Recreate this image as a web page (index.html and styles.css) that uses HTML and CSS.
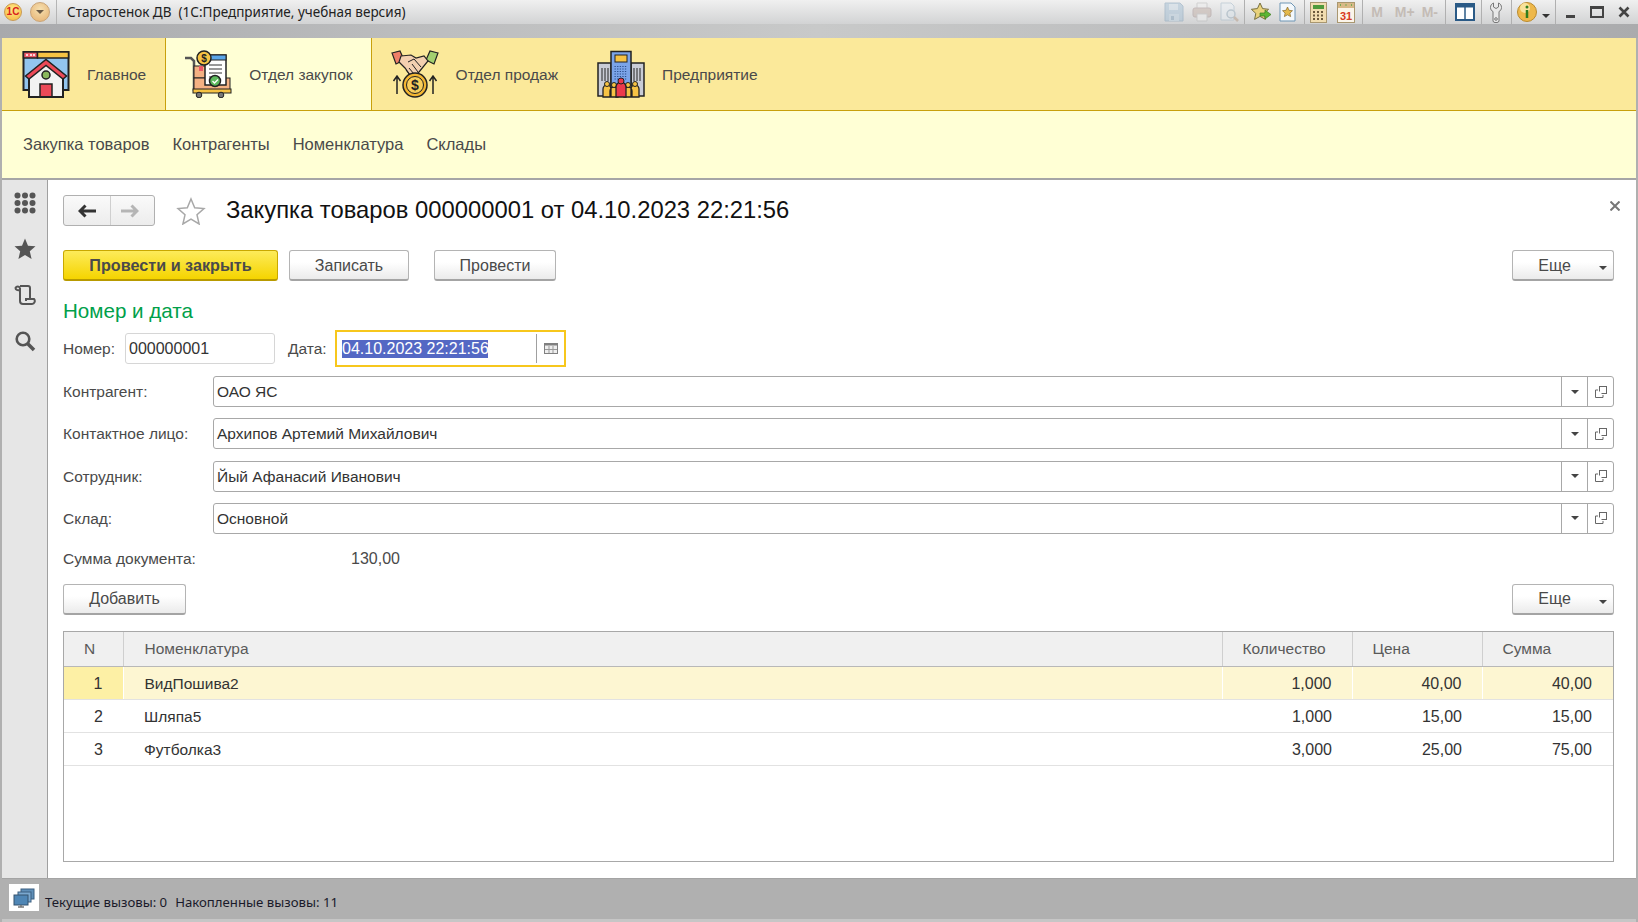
FILE: index.html
```html
<!DOCTYPE html>
<html lang="ru">
<head>
    <meta charset="UTF-8">
    <title>Закупка товаров</title>
    <link rel="stylesheet" href="styles.css">
</head>
<body>
<div class="app">
    <div class="titlebar">
        <span class="logo-1c">1С</span>
        <span class="menu-btn"><i></i></span>
        <span class="title-sep"></span>
        <span class="title-text">Старостенок ДВ&nbsp; (1С:Предприятие, учебная версия)</span>
        <div class="tools">
            <svg class="tool dim" width="20" height="20" viewBox="0 0 20 20"><path d="M1 1h15l3 3v15H1z" fill="#a9c2d6" stroke="#8aa6bd"/><path d="M5 2h9v6H5z" fill="#cfdde8"/><path d="M5 12h10v7H5z" fill="#bcd0df"/><path d="M7 14h3v4H7z" fill="#8aa6bd"/></svg>
            <svg class="tool dim gap-8" width="20" height="20" viewBox="0 0 20 20"><path d="M5 1h10v6H5z" fill="#eee" stroke="#bbb"/><rect x="1" y="6" width="18" height="9" rx="2" fill="#c4b4ac" stroke="#a99"/><path d="M5 12h10v7H5z" fill="#eee" stroke="#bbb"/></svg>
            <svg class="tool dim gap-7" width="20" height="20" viewBox="0 0 20 20"><path d="M2 1h10l3 3v14H2z" fill="#e8eef3" stroke="#a8bccb"/><circle cx="12" cy="12" r="4" fill="#dde6ec" stroke="#9cb0bf" stroke-width="1.5"/><path d="M15 15l4 4" stroke="#b9a08c" stroke-width="2.5"/></svg>
            <span class="tool-sep gap-5"></span>
            <svg class="gap-6" width="20" height="20" viewBox="0 0 20 20"><path d="M9 1l2.600 5.600 6 .7-4.400 4.100 1.200 6L9 14.400l-5.400 3 1.200-6L.4 7.300l6-.7z" fill="#e9d27c" stroke="#77703f"/><path d="M9 11h5V8l6 4.500-6 4.500v-3H9z" fill="#5cb531" stroke="#3c7d20" stroke-width=".7"/></svg>
            <svg class="gap-8" width="17" height="20" viewBox="0 0 17 20"><path d="M1 1h11l4 4v14H1z" fill="#f4f8fb" stroke="#6f96b5"/><path d="M8.500 5l1.500 3.300 3.500.4-2.600 2.400.7 3.500-3.100-1.800-3.100 1.800.7-3.500L3.500 8.700 7 8.300z" fill="#e4b94a" stroke="#86692a" stroke-width=".7"/></svg>
            <span class="tool-sep gap-8"></span>
            <svg class="gap-5" width="17" height="21" viewBox="0 0 17 21"><rect x=".5" y=".5" width="16" height="20" fill="#f1ddb0" stroke="#a99770"/><rect x="3" y="3" width="11" height="4" fill="#4f9a3c"/><path d="M3 9h2v2H3zM7 9h2v2H7zM11 9h2v2h-2zM3 12.500h2v2H3zM7 12.500h2v2H7zM11 12.500h2v2h-2zM3 16h2v2H3zM7 16h2v2H7zM11 16h2v2h-2z" fill="#6b5a3c"/></svg>
            <svg class="gap-10" width="18" height="21" viewBox="0 0 18 21"><rect x=".5" y=".5" width="17" height="20" fill="#fbf5ea" stroke="#a99770"/><rect x="1" y="1" width="16" height="5" fill="#d8b988"/><path d="M3 3h1M8.500 3h1M14 3h1" stroke="#7a5" stroke-width="2"/><text class="cal-num" x="9" y="18" text-anchor="middle">31</text></svg>
            <span class="tool-sep gap-7"></span>
            <span class="mem gap-8">M</span>
            <span class="mem gap-12">M+</span>
            <span class="mem gap-7">M-</span>
            <span class="tool-sep gap-7"></span>
            <svg class="gap-9" width="20" height="18" viewBox="0 0 20 18"><rect x="1" y="1" width="18" height="16" fill="#fff" stroke="#2a5a86" stroke-width="2"/><path d="M1 3h18" stroke="#2a5a86" stroke-width="3"/><path d="M10 2v15" stroke="#2a5a86" stroke-width="1.500"/></svg>
            <span class="tool-sep gap-6"></span>
            <svg class="gap-8" width="12" height="21" viewBox="0 0 12 21"><path d="M3.500 1v4l2.500 1.500L8.500 5V1c2 .8 3 2.500 3 4.500 0 2-1.200 3.500-2.500 4V19a2 2 0 0 1-2 1.500H5A2 2 0 0 1 3 19V9.500C1.700 9 .5 7.500.5 5.500c0-2 1-3.700 3-4.500z" fill="#e8e8e8" stroke="#777"/><circle cx="6" cy="17" r="1.300" fill="none" stroke="#777"/></svg>
            <span class="tool-sep gap-9"></span>
            <svg class="gap-5" width="20" height="20" viewBox="0 0 20 20"><circle cx="10" cy="10" r="9.500" fill="#eeb84a" stroke="#b98a2e"/><circle cx="8" cy="6" r="5" fill="#f8e29a"/><circle cx="10" cy="5" r="1.500" fill="#2f7d1e"/><path d="M10 8v8" stroke="#2f7d1e" stroke-width="2.500"/></svg>
            <i class="caret caret-dark"></i>
            <span class="tool-sep gap-5"></span>
            <span class="win-min"></span>
            <span class="win-max"></span>
            <svg class="win-close" width="12" height="12" viewBox="0 0 12 12"><path d="M1.500 1.500l9 9M10.500 1.500l-9 9" stroke="#444" stroke-width="2.600"/></svg>
        </div>
    </div>
    <div class="title-band"></div>

    <div class="frame">
        <nav class="sections">
            <a class="section">
                <svg width="48" height="48" viewBox="0 0 48 48">
                    <rect x="1.500" y="2" width="45" height="38" fill="#93c5ee" stroke="#222" stroke-width="2"/>
                    <rect x="1.500" y="2" width="14" height="6" fill="#ec5a68" stroke="#222" stroke-width="1.500"/>
                    <rect x="15.500" y="2" width="31" height="6" fill="#f6c344" stroke="#222" stroke-width="1.500"/>
                    <path d="M4 5h2M8 5h2M11 5h2" stroke="#fff" stroke-width="1.500"/>
                    <path d="M7 25L24 11l17 14v22H7z" fill="#f2f2f2" stroke="#222" stroke-width="2"/>
                    <path d="M3.500 26L24 9.500 44.500 26 41 29 24 15.500 7 29z" fill="#ec4a58" stroke="#222" stroke-width="1.500"/>
                    <circle cx="24" cy="25" r="4" fill="#8ab85c" stroke="#222" stroke-width="1.500"/>
                    <rect x="18" y="34" width="12" height="13" fill="#ec4a58" stroke="#222" stroke-width="1.500"/>
                    <path d="M7 47h34" stroke="#222" stroke-width="2"/>
                </svg>
                <span>Главное</span>
            </a>
            <a class="section active">
                <svg width="48" height="48" viewBox="0 0 48 48">
                    <path d="M1 8h6l3 3v30" fill="none" stroke="#555" stroke-width="2.500"/>
                    <rect x="10" y="16" width="14" height="12" fill="#f4b183" stroke="#222"/>
                    <rect x="10" y="28" width="36" height="12" fill="#f4b183" stroke="#222"/>
                    <rect x="15" y="16" width="4" height="5" fill="#ec5a68"/>
                    <rect x="21" y="5" width="21" height="30" fill="#fff" stroke="#222" stroke-width="1.500"/>
                    <rect x="21" y="5" width="21" height="5" fill="#5aa5e8" stroke="#222"/>
                    <path d="M25 15h13M25 19h13M25 23h13M25 27h6" stroke="#333" stroke-width="1.200"/>
                    <circle cx="20" cy="8" r="7" fill="#f6c344" stroke="#222" stroke-width="1.500"/>
                    <text class="coin-s" x="20" y="12" text-anchor="middle">$</text>
                    <circle cx="31" cy="31" r="5.500" fill="#5cb85c" stroke="#222" stroke-width="1.500"/>
                    <path d="M28.500 31l2 2 3.500-3.500" fill="none" stroke="#fff" stroke-width="1.300"/>
                    <rect x="9" y="39" width="38" height="4" fill="#f6c344" stroke="#222"/>
                    <circle cx="15" cy="45" r="2.800" fill="#777" stroke="#222"/>
                    <circle cx="37" cy="45" r="2.800" fill="#777" stroke="#222"/>
                </svg>
                <span>Отдел закупок</span>
            </a>
            <a class="section">
                <svg width="48" height="48" viewBox="0 0 48 48">
                    <path d="M1 3l8-2 4 9-8 4z" fill="#ef7f68" stroke="#222" stroke-width="1.200"/>
                    <path d="M47 3l-8-2-4 9 8 4z" fill="#a4d070" stroke="#222" stroke-width="1.200"/>
                    <path d="M10 6l10-1 5 3 8-2 4 5-9 11-5 5-4-2-5-7-6-6z" fill="#f3d0b0" stroke="#222" stroke-width="1.200"/>
                    <path d="M17 12l6-3 7 8M21 14l6 8M18 18l5 6M15 20l4 5" fill="none" stroke="#222" stroke-width="1"/>
                    <circle cx="24" cy="35" r="12" fill="#f2b632" stroke="#222" stroke-width="1.500"/>
                    <circle cx="24" cy="35" r="8.500" fill="#f9cf5c" stroke="#222" stroke-width="1"/>
                    <text class="coin-b" x="24" y="40" text-anchor="middle">$</text>
                    <path d="M6 44V27M2.500 31L6 26l3.500 5M42 44V27M38.500 31L42 26l3.500 5" fill="none" stroke="#222" stroke-width="1.500"/>
                </svg>
                <span>Отдел продаж</span>
            </a>
            <a class="section">
                <svg width="48" height="48" viewBox="0 0 48 48">
                    <rect x="1" y="13" width="13" height="33" fill="#c9ccd6" stroke="#222" stroke-width="1.500"/>
                    <rect x="34" y="13" width="13" height="33" fill="#c9ccd6" stroke="#222" stroke-width="1.500"/>
                    <path d="M5 18v13M8 18v13M11 18v13M37 18v13M40 18v13M43 18v13" stroke="#222"/>
                    <rect x="14" y="1.500" width="20" height="42" fill="#7ba4e8" stroke="#222" stroke-width="1.500"/>
                    <rect x="18" y="5" width="12" height="7" fill="#f6c344" stroke="#222"/>
                    <path d="M17.500 16.500h13M17.500 19h13M17.500 21.500h13M17.500 24h13M17.500 26.500h13M17.500 29h13" stroke="#2c4f8c" stroke-width="1.200" stroke-dasharray="1.300 1.300"/>
                    <path d="M6 47v-8a4 4 0 0 1 8 0v8zM13 47v-6a4 4 0 0 1 8 0v6zM27 47v-6a4 4 0 0 1 8 0v6zM34 47v-8a4 4 0 0 1 8 0v8z" fill="#f6c344" stroke="#222" stroke-width="1.300"/>
                    <circle cx="10" cy="34" r="2.500" fill="#f6c344" stroke="#222"/>
                    <circle cx="17" cy="35" r="2.500" fill="#f6c344" stroke="#222"/>
                    <circle cx="31" cy="35" r="2.500" fill="#f6c344" stroke="#222"/>
                    <circle cx="38" cy="34" r="2.500" fill="#f6c344" stroke="#222"/>
                    <path d="M19 47V37a5 5 0 0 1 10 0v10z" fill="#ec3a4c" stroke="#222" stroke-width="1.300"/>
                    <circle cx="24" cy="31" r="3" fill="#ec3a4c" stroke="#222"/>
                </svg>
                <span>Предприятие</span>
            </a>
        </nav>
        <nav class="subsections">
            <a>Закупка товаров</a>
            <a>Контрагенты</a>
            <a>Номенклатура</a>
            <a>Склады</a>
        </nav>

        <div class="main">
            <aside class="sidebar">
                <svg width="22" height="22" viewBox="0 0 22 22" fill="#555">
                    <circle cx="3.500" cy="3.500" r="3"/><circle cx="11" cy="3.500" r="3"/><circle cx="18.500" cy="3.500" r="3"/>
                    <circle cx="3.500" cy="11" r="3"/><circle cx="11" cy="11" r="3"/><circle cx="18.500" cy="11" r="3"/>
                    <circle cx="3.500" cy="18.500" r="3"/><circle cx="11" cy="18.500" r="3"/><circle cx="18.500" cy="18.500" r="3"/>
                </svg>
                <svg width="22" height="22" viewBox="0 0 22 22"><path d="M11 .5l3 7.200 7.500.6-5.700 5 1.800 7.700L11 16.900 4.400 21l1.800-7.700-5.700-5L8 7.700z" fill="#555"/></svg>
                <svg width="22" height="22" viewBox="0 0 22 22" fill="none" stroke="#555" stroke-width="2"><path d="M6 4v13a3 3 0 0 0 3 3h9a3 3 0 0 0 2-5h-8v2M6 4a2.500 2.500 0 0 0-4.500 0c0 2 2 2.500 4.500 2M6 2h8a2 2 0 0 1 2 2v11"/></svg>
                <svg width="22" height="22" viewBox="0 0 22 22" fill="none" stroke="#555"><circle cx="9" cy="9" r="6.300" stroke-width="2.600"/><path d="M13.500 13.500l6.500 6.500" stroke-width="3.600"/></svg>
            </aside>

            <div class="content">
                <div class="heading">
                    <div class="nav-btns">
                        <button class="nav-btn">
                            <svg width="18" height="14" viewBox="0 0 18 14"><path d="M7.500 1.500L2 7l5.500 5.500M2 7h16" fill="none" stroke="#333" stroke-width="3"/></svg>
                        </button>
                        <button class="nav-btn nav-next">
                            <svg width="18" height="14" viewBox="0 0 18 14"><path d="M10.500 1.500L16 7l-5.500 5.500M16 7H0" fill="none" stroke="#b5b5b5" stroke-width="3"/></svg>
                        </button>
                    </div>
                    <svg class="fav" width="30" height="28" viewBox="0 0 30 28"><path d="M15 2l3.700 8.700 9.300.9-7 6.200 2.100 9.200L15 22.200 6.900 27 9 17.800 2 11.600l9.300-.9z" fill="#fff" stroke="#a8a8a8" stroke-width="1.500"/></svg>
                    <h1>Закупка товаров 000000001 от 04.10.2023 22:21:56</h1>
                    <svg class="close" width="10" height="10" viewBox="0 0 10 10"><path d="M.5.500l9 9M9.500.500l-9 9" stroke="#777" stroke-width="2"/></svg>
                </div>

                <div class="toolbar">
                    <button class="btn btn-primary">Провести и закрыть</button>
                    <button class="btn btn-save">Записать</button>
                    <button class="btn btn-post">Провести</button>
                    <button class="btn btn-more">Еще<i class="caret"></i></button>
                </div>

                <h2>Номер и дата</h2>

                <div class="number-row">
                    <label class="num-label">Номер:</label>
                    <div class="input num-input">000000001</div>
                    <label class="date-label">Дата:</label>
                    <div class="date-box">
                        <span class="date-value">04.10.2023 22:21:56</span>
                        <span class="date-pick">
                            <svg width="14" height="11" viewBox="0 0 14 11"><rect x=".5" y=".5" width="13" height="10" fill="#eee" stroke="#808080"/><path d="M0 1.500h14" stroke="#808080" stroke-width="2"/><path d="M5 3v7M9 3v7M1 6.500h12" stroke="#999"/></svg>
                        </span>
                    </div>
                </div>

                <div class="fields">
                    <label>Контрагент:</label>
                    <div class="input ref"><span>ОАО ЯС</span><b><i class="caret"></i></b><b><svg width="12" height="12" viewBox="0 0 12 12" fill="#fff" stroke="#666"><rect x="4.500" y=".5" width="7" height="7"/><path d="M3 4H.5v7.500H8V9"/></svg></b></div>
                    <label>Контактное лицо:</label>
                    <div class="input ref"><span>Архипов Артемий Михайлович</span><b><i class="caret"></i></b><b><svg width="12" height="12" viewBox="0 0 12 12" fill="#fff" stroke="#666"><rect x="4.500" y=".5" width="7" height="7"/><path d="M3 4H.5v7.500H8V9"/></svg></b></div>
                    <label class="low">Сотрудник:</label>
                    <div class="input ref low"><span>Йый Афанасий Иванович</span><b><i class="caret"></i></b><b><svg width="12" height="12" viewBox="0 0 12 12" fill="#fff" stroke="#666"><rect x="4.500" y=".5" width="7" height="7"/><path d="M3 4H.5v7.500H8V9"/></svg></b></div>
                    <label class="low">Склад:</label>
                    <div class="input ref low"><span>Основной</span><b><i class="caret"></i></b><b><svg width="12" height="12" viewBox="0 0 12 12" fill="#fff" stroke="#666"><rect x="4.500" y=".5" width="7" height="7"/><path d="M3 4H.5v7.500H8V9"/></svg></b></div>
                </div>

                <div class="sum-row">
                    <label>Сумма документа:</label>
                    <span class="sum-value">130,00</span>
                </div>

                <div class="toolbar table-bar">
                    <button class="btn btn-add">Добавить</button>
                    <button class="btn btn-more">Еще<i class="caret"></i></button>
                </div>

                <div class="grid-box">
                    <table>
                        <colgroup>
                            <col class="c-n"><col><col class="c-q"><col class="c-p"><col class="c-s">
                        </colgroup>
                        <thead>
                            <tr><th>N</th><th>Номенклатура</th><th>Количество</th><th>Цена</th><th>Сумма</th></tr>
                        </thead>
                        <tbody>
                            <tr class="current"><td class="r">1</td><td>ВидПошива2</td><td class="r">1,000</td><td class="r">40,00</td><td class="r">40,00</td></tr>
                            <tr><td class="r">2</td><td>Шляпа5</td><td class="r">1,000</td><td class="r">15,00</td><td class="r">15,00</td></tr>
                            <tr><td class="r">3</td><td>Футболка3</td><td class="r">3,000</td><td class="r">25,00</td><td class="r">75,00</td></tr>
                        </tbody>
                    </table>
                </div>
            </div>
        </div>

        <div class="statusbar">
            <span class="status-icon">
                <svg width="22" height="20" viewBox="0 0 22 20"><rect x="8" y="1" width="13" height="10" fill="#5f8fb8" stroke="#3b5f80"/><rect x="5" y="4" width="13" height="10" fill="#7aa8cf" stroke="#3b5f80"/><rect x="1" y="7" width="14" height="10" fill="#4f86b5" stroke="#34536e"/><path d="M5 19h6M8 17v2" stroke="#777" stroke-width="1.500"/></svg>
            </span>
            <span class="status-text">Текущие вызовы: 0</span>
            <span class="status-text">Накопленные вызовы: 11</span>
        </div>
    </div>
</div>
</body>
</html>
```

FILE: styles.css
```css
* {
    box-sizing: border-box;
}
body {
    margin: 0;
    font-family: "Liberation Sans", Arial, sans-serif;
    font-size: 16px;
    color: #4a4a4a;
    background: #b0b0b0;
}
.app {
    width: 1638px;
    height: 922px;
    display: flex;
    flex-direction: column;
    overflow: hidden;
}

/* window title */
.titlebar {
    height: 24px;
    display: flex;
    align-items: center;
    background: linear-gradient(#f0f0f0, #d2d3d4);
}
.logo-1c {
    width: 18px;
    height: 18px;
    margin-left: 4px;
    border-radius: 50%;
    background: radial-gradient(circle at 50% 35%, #ffe98a, #f6b73c);
    border: 1px solid #c99a52;
    color: #d8221c;
    font-size: 10px;
    font-weight: bold;
    line-height: 16px;
    text-align: center;
}
.menu-btn {
    width: 20px;
    height: 20px;
    margin-left: 8px;
    border-radius: 50%;
    background: radial-gradient(circle at 50% 35%, #f6e0b0, #e5b070);
    border: 1px solid #c9a477;
    display: flex;
    align-items: center;
    justify-content: center;
}
.menu-btn i {
    border: 4px solid transparent;
    border-top: 4px solid #6b5a45;
    margin-top: 4px;
}
.title-sep {
    width: 1px;
    height: 24px;
    margin-left: 6px;
    background: #b5b5b5;
}
.title-text {
    margin-left: 10px;
    font-family: "Noto Sans", sans-serif;
    font-size: 13.5px;
    color: #222;
    white-space: nowrap;
}
.tools {
    margin-left: auto;
    padding-right: 8px;
    display: flex;
    align-items: center;
    height: 24px;
}
.gap-5 { margin-left: 5px; }
.gap-6 { margin-left: 6px; }
.gap-7 { margin-left: 7px; }
.gap-8 { margin-left: 8px; }
.gap-9 { margin-left: 9px; }
.gap-10 { margin-left: 10px; }
.gap-12 { margin-left: 12px; }
.tool.dim {
    opacity: .55;
}
.tool-sep {
    width: 1px;
    height: 24px;
    background: #b0b0b0;
}
.mem {
    font-size: 14px;
    font-weight: bold;
    color: #c4bcb6;
}
.cal-num {
    font: bold 11px "Liberation Sans", sans-serif;
    fill: #d83a22;
}
.tools .caret {
    margin: 7px 0 0 5px;
}
.win-min {
    width: 9px;
    height: 3px;
    margin: 8px 0 0 10px;
    background: #444;
}
.win-max {
    width: 14px;
    height: 12px;
    margin-left: 15px;
    border: 2px solid #444;
    border-top-width: 3px;
}
.win-close {
    margin-left: 14px;
}
.title-band {
    height: 14px;
    background: linear-gradient(90deg, #a8a9ac, #bcbdbe 25%, #c8c9c9 50%, #bdbebf 72%, #aaabad);
}

/* frame with panels */
.frame {
    flex: 1;
    min-height: 0;
    margin: 0 2px;
    display: flex;
    flex-direction: column;
}
.sections {
    height: 73px;
    flex: none;
    display: flex;
    background: #fbe99a;
    border-bottom: 1px solid #c8a00c;
}
.section {
    display: flex;
    align-items: center;
    gap: 17px;
    padding: 0 19px 0 20px;
    color: #4a4a4a;
    font-size: 15.5px;
}
.section span {
    padding-top: 2px;
}
.section.active {
    padding: 0 18px;
    background: #ffffd5;
    border-left: 1px solid #c8a00c;
    border-right: 1px solid #c8a00c;
    height: 73px;
    border-bottom: 1px solid #c8a00c;
}
.section.active + .section {
    padding-left: 19px;
}
.subsections {
    height: 69px;
    flex: none;
    display: flex;
    align-items: center;
    gap: 23px;
    padding-left: 21px;
    font-size: 16.5px;
    background: #ffffd5;
    border-bottom: 2px solid #a6a6a6;
}

.main {
    flex: 1;
    min-height: 0;
    display: flex;
}
.sidebar {
    width: 46px;
    flex: none;
    background: #e6e6e6;
    border-right: 1px solid #a0a0a0;
    display: flex;
    flex-direction: column;
    align-items: center;
    gap: 24px;
    padding-top: 12px;
}
.content {
    flex: 1;
    min-width: 0;
    background: #fff;
    padding: 15px 22px 16px 15px;
    display: flex;
    flex-direction: column;
}

/* form heading */
.heading {
    display: flex;
    align-items: center;
    height: 31px;
    margin-bottom: 24px;
    position: relative;
}
.nav-btns {
    display: flex;
    width: 92px;
    height: 31px;
    border: 1px solid #b0b0b0;
    border-radius: 3px;
    background: linear-gradient(#fafafa, #ececec);
}
.nav-btn {
    width: 46px;
    padding: 0;
    border: 0;
    background: none;
    display: flex;
    align-items: center;
    justify-content: center;
}
.nav-next {
    width: 44px;
    padding-right: 5px;
    border-left: 1px solid #cfcfcf;
}
.fav {
    margin-left: 21px;
}
h1 {
    margin: 0 0 2px 20px;
    font-size: 23.8px;
    font-weight: normal;
    color: #111;
    white-space: nowrap;
}
.close {
    position: absolute;
    right: -6px;
    top: 6px;
}

/* buttons */
.toolbar {
    display: flex;
    height: 31px;
}
.btn {
    height: 31px;
    padding: 1px 0 0;
    font: inherit;
    color: #4a4a4a;
    border: 1px solid #b4b4b4;
    border-bottom: 2px solid #a4a4a4;
    border-radius: 3px;
    background: linear-gradient(#fff 40%, #ebebeb);
}
.btn-primary {
    width: 215px;
    font-size: 16.2px;
    font-weight: bold;
    background: linear-gradient(#fdeb5a, #f5d400);
    border-color: #c9a800;
    border-bottom-color: #b89a00;
}
.btn-save {
    width: 120px;
    margin-left: 11px;
}
.btn-post {
    width: 122px;
    margin-left: 25px;
}
.btn-more {
    width: 102px;
    margin-left: auto;
    position: relative;
    padding-right: 17px;
}
.btn-add {
    width: 123px;
}
.caret {
    display: inline-block;
    border: 4px solid transparent;
    border-top: 4px solid #444;
    border-bottom: 0;
}
.btn-more .caret {
    position: absolute;
    right: 6px;
    top: 15px;
}
.caret-dark {
    border-top-color: #333;
}

h2 {
    margin: 18px 0 7px;
    height: 24px;
    line-height: 24px;
    font-size: 20.6px;
    font-weight: normal;
    color: #00a04a;
}

/* fields */
label {
    color: #4a4a4a;
    font-size: 15.5px;
    white-space: nowrap;
}
label.low {
    padding-top: 1px;
}
.input {
    height: 31px;
    border: 1px solid #bdbdbd;
    border-radius: 3px;
    color: #333;
    display: flex;
    align-items: center;
    padding-left: 3px;
}
.number-row {
    display: flex;
    align-items: center;
    height: 37px;
}
.num-label {
    width: 52px;
    flex: none;
}
.num-input {
    width: 150px;
    margin-left: 10px;
    border-color: #d6d6d6;
}
.date-label {
    width: 39px;
    flex: none;
    margin-left: 13px;
}
.date-box {
    width: 231px;
    height: 37px;
    margin-left: 8px;
    border: 2px solid #f7c71c;
    display: flex;
    align-items: center;
    padding-left: 5px;
}
.date-value {
    width: 146px;
    height: 18px;
    line-height: 18px;
    background: #5468c4;
    color: #fff;
    white-space: nowrap;
}
.date-pick {
    margin-left: auto;
    width: 28px;
    height: 29px;
    border-left: 1px solid #a0a0a0;
    display: flex;
    align-items: center;
    justify-content: center;
}
.fields {
    display: grid;
    grid-template-columns: 150px 1fr;
    grid-auto-rows: 31px;
    align-items: center;
    row-gap: 11.34px;
    margin-top: 9px;
}
.ref {
    border-color: #a8a8a8;
    font-size: 15.5px;
}
.ref span {
    flex: 1;
}
.ref.low span {
    padding-top: 1px;
}
.ref b {
    width: 26px;
    height: 29px;
    border-left: 1px solid #a8a8a8;
    display: flex;
    align-items: center;
    justify-content: center;
    font-weight: normal;
}
.sum-row {
    display: flex;
    align-items: center;
    height: 24px;
    margin-top: 13px;
}
.sum-row label {
    width: 150px;
    flex: none;
}
.sum-value {
    width: 187px;
    text-align: right;
    color: #4a4a4a;
}
.table-bar {
    margin-top: 13px;
    justify-content: space-between;
}

/* table */
.grid-box {
    flex: 1;
    min-height: 0;
    margin-top: 16px;
    border: 1px solid #a8a8a8;
}
table {
    width: 100%;
    table-layout: fixed;
    border-collapse: collapse;
}
.c-n {
    width: 59px;
}
.c-q,
.c-p {
    width: 130px;
}
.c-s {
    width: 131px;
}
th {
    height: 35px;
    padding: 0 0 0 20px;
    font-size: 15.5px;
    font-weight: normal;
    text-align: left;
    color: #5a5a5a;
    background: #f0f0f0;
    border-right: 1px solid #cfcfcf;
    border-bottom: 1px solid #b8b8b8;
}
th:nth-child(2),
td:nth-child(2) {
    padding-left: 21px;
}
td {
    height: 33px;
    padding: 2px 0 0 20px;
    font-size: 15.5px;
    color: #333;
    border-bottom: 1px solid #e2e2e2;
}
td.r {
    padding: 2px 20px 0 0;
    font-size: 16px;
    text-align: right;
}
td.r:last-child {
    padding-right: 21px;
}
th:last-child {
    border-right: 0;
}
.current td {
    background: #fdf6d2;
    border-right: 1px solid #fff;
}
.current td:first-child {
    background: #fdf0a5;
}
.current td:last-child {
    border-right: 0;
}

/* status */
.statusbar {
    height: 44px;
    flex: none;
    display: flex;
    align-items: center;
    padding-left: 7px;
    background: #b0b0b0;
    border-top: 1px solid #a4a4a4;
    border-bottom: 3px solid #c6c6c6;
    font-family: "Noto Sans", sans-serif;
    font-size: 13.2px;
    color: #1a1a2a;
}
.status-icon {
    width: 30px;
    height: 27px;
    margin-top: -3px;
    background: #fff;
    display: flex;
    align-items: center;
    justify-content: center;
    margin-right: 6px;
}
.status-text {
    margin-right: 8px;
    padding-top: 5px;
}
.coin-s {
    font: bold 10px "Liberation Sans", sans-serif;
    fill: #222;
}
.coin-b {
    font: bold 14px "Liberation Sans", sans-serif;
    fill: #222;
}
```
